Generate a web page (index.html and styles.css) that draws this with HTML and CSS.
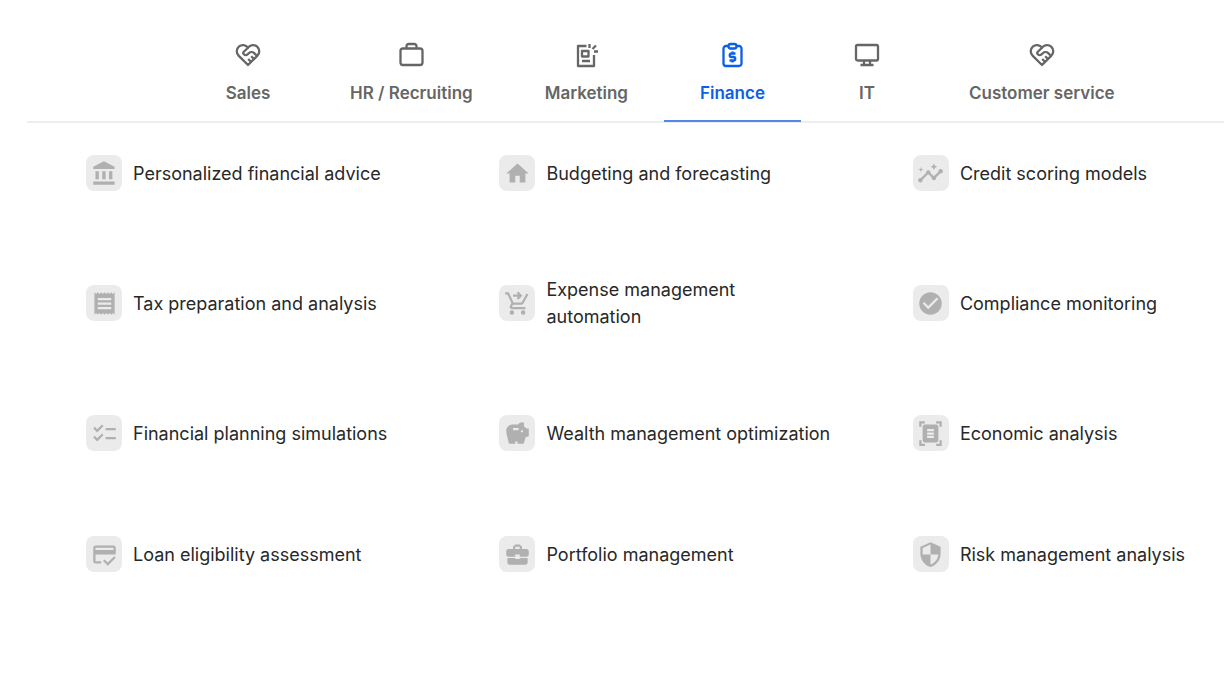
FILE: index.html
```html
<!DOCTYPE html>
<html lang="en">
<head>
    <meta charset="UTF-8">
    <meta name="viewport" content="width=device-width, initial-scale=1.0">
    <title>Use cases - Finance</title>
    <link rel="stylesheet" href="styles.css">
</head>
<body>

    <nav class="tabs">
        <button type="button" class="tab">
            <svg class="tab-icon" viewBox="0 0 28 28"><path d="M23.2 14.9 14 24l-9.2-9.1A6.2 6.2 0 1 1 14 6.7a6.2 6.2 0 1 1 9.2 8.2"/><path d="M14 6.7 9.8 10.8a1.7 1.7 0 0 0 0 2.4c1.2 1.2 2.9 1 4 0l1-1a3.9 3.9 0 0 1 5.4 0l2.9 2.8M17.2 15.2l2.9 2.9M14.2 18l3 3"/></svg>
            <span>Sales</span>
        </button>
        <button type="button" class="tab">
            <svg class="tab-icon" viewBox="0 0 28 28"><rect x="3.5" y="7.5" width="22" height="16.5" rx="2.5"/><path d="M9.500 7.500V5.200A2.200 2.200 0 0 1 11.700 3h5.600A2.200 2.200 0 0 1 19.500 5.200v2.300"/></svg>
            <span>HR / Recruiting</span>
        </button>
        <button type="button" class="tab">
            <svg class="tab-icon" viewBox="0 0 28 28"><path d="M14.5 5H6v20h16V14M10 10h6.500v5.500H10zM10 20h8M17.500 3v4M20.500 8l3.500-3.500M22 10.500h4"/></svg>
            <span>Marketing</span>
        </button>
        <button type="button" class="tab active">
            <svg class="tab-icon" viewBox="0 0 28 28"><path d="M10.500 5H8a2.500 2.500 0 0 0-2.500 2.500v15A2.500 2.500 0 0 0 8 25h13a2.500 2.500 0 0 0 2.500-2.500v-15A2.500 2.500 0 0 0 21 5h-2.500"/><rect x="10.500" y="3" width="8" height="4.500" rx="2.200"/><path d="M17.500 12.500h-4a1.700 1.700 0 0 0 0 3.500h2a1.700 1.700 0 0 1 0 3.500h-4M14.500 10.500v2M14.500 19.500v2"/></svg>
            <span>Finance</span>
        </button>
        <button type="button" class="tab">
            <svg class="tab-icon" viewBox="0 0 28 28"><rect x="3" y="4" width="22" height="15.500" rx="1.500"/><path d="M11 19.500V24M17 19.500V24M7.500 24h13"/></svg>
            <span>IT</span>
        </button>
        <button type="button" class="tab">
            <svg class="tab-icon" viewBox="0 0 28 28"><path d="M23.2 14.9 14 24l-9.2-9.1A6.2 6.2 0 1 1 14 6.7a6.2 6.2 0 1 1 9.2 8.2"/><path d="M14 6.7 9.8 10.8a1.7 1.7 0 0 0 0 2.4c1.2 1.2 2.9 1 4 0l1-1a3.9 3.9 0 0 1 5.4 0l2.9 2.8M17.2 15.2l2.9 2.9M14.2 18l3 3"/></svg>
            <span>Customer service</span>
        </button>
    </nav>

    <ul class="use-cases">
        <li class="use-case">
            <span class="icon-box"><svg viewBox="0 0 24 24"><path d="M4 10v7h3v-7H4zm6 0v7h3v-7h-3zM2 22h19v-3H2v3zm14-12v7h3v-7h-3zm-4.500-9L2 6v2h19V6l-9.500-5z"/></svg></span>
            <span class="label">Personalized financial advice</span>
        </li>
        <li class="use-case">
            <span class="icon-box"><svg viewBox="0 0 24 24"><path d="M10 20v-6h4v6h5v-8h3L12 3 2 12h3v8z"/></svg></span>
            <span class="label">Budgeting and forecasting</span>
        </li>
        <li class="use-case">
            <span class="icon-box"><svg viewBox="0 0 24 24"><path d="M21 8c-1.450 0-2.260 1.440-1.930 2.510l-3.550 3.560c-.3-.09-.74-.09-1.040 0l-2.550-2.550C12.270 10.450 11.460 9 10 9c-1.450 0-2.270 1.440-1.930 2.520l-4.560 4.550C2.440 15.740 1 16.550 1 18c0 1.100.9 2 2 2 1.450 0 2.260-1.440 1.930-2.510l4.550-4.560c.3.09.74.09 1.040 0l2.550 2.550C12.730 16.550 13.540 18 15 18c1.450 0 2.270-1.440 1.930-2.520l3.560-3.550C21.560 12.260 23 11.450 23 10c0-1.100-.9-2-2-2zM15 9l.94-2.070L18 6l-2.060-.93L15 3l-.92 2.070L12 6l2.080.93zM3.500 11 4 9l2-.5L4 8l-.5-2L3 8l-2 .5L3 9z"/></svg></span>
            <span class="label">Credit scoring models</span>
        </li>

        <li class="use-case">
            <span class="icon-box"><svg viewBox="0 0 24 24"><path d="M18 17H6v-2h12v2zm0-4H6v-2h12v2zm0-4H6V7h12v2zM3 22l1.500-1.500L6 22l1.500-1.500L9 22l1.500-1.500L12 22l1.500-1.500L15 22l1.500-1.500L18 22l1.500-1.500L21 22V2l-1.500 1.500L18 2l-1.500 1.500L15 2l-1.500 1.500L12 2l-1.500 1.500L9 2 7.500 3.500 6 2 4.500 3.500 3 2v20z"/></svg></span>
            <span class="label">Tax preparation and analysis</span>
        </li>
        <li class="use-case">
            <span class="icon-box"><svg viewBox="0 0 24 24"><path d="M7 18a2 2 0 1 0 0 4 2 2 0 0 0 0-4zm10 0a2 2 0 1 0 0 4 2 2 0 0 0 0-4zm-1.450-5c.75 0 1.410-.41 1.750-1.030L21.700 4 19.960 3l-4.400 8H8.530L4.270 2H1v2h2l3.600 7.590-1.350 2.440C4.520 15.370 5.480 17 7 17h12v-2H7l1.100-2h7.450zM11.300 2.700 12.600 4H8v2h4.600l-1.300 1.300 1.400 1.400L16.400 5l-3.700-3.700-1.400 1.400z"/></svg></span>
            <span class="label">Expense management automation</span>
        </li>
        <li class="use-case">
            <span class="icon-box"><svg viewBox="0 0 24 24"><path d="M12 2C6.480 2 2 6.480 2 12s4.480 10 10 10 10-4.480 10-10S17.520 2 12 2zm-2 15-5-5 1.410-1.410L10 14.170l7.590-7.590L19 8l-9 9z"/></svg></span>
            <span class="label">Compliance monitoring</span>
        </li>

        <li class="use-case">
            <span class="icon-box"><svg viewBox="0 0 24 24"><path d="M22 7h-9v2h9V7zm0 8h-9v2h9v-2zM5.540 11 2 7.460l1.410-1.410 2.120 2.120 4.240-4.240 1.410 1.410L5.540 11zm0 8L2 15.460l1.410-1.410 2.120 2.120 4.240-4.240 1.410 1.410L5.540 19z"/></svg></span>
            <span class="label">Financial planning simulations</span>
        </li>
        <li class="use-case">
            <span class="icon-box"><svg viewBox="0 0 24 24"><path d="m19.830 7.500-2.270-2.270c.07-.42.18-.81.32-1.150.08-.18.12-.37.12-.58 0-.83-.67-1.500-1.500-1.500-1.640 0-3.090.79-4 2h-5C4.460 4 2 6.460 2 9.500S4.500 21 4.500 21H10v-2h2v2h5.500l1.680-5.590 2.820-.94V7.500h-2.170zM13 9H8V7h5v2zm3 2c-.55 0-1-.45-1-1s.45-1 1-1 1 .45 1 1-.45 1-1 1z"/></svg></span>
            <span class="label">Wealth management optimization</span>
        </li>
        <li class="use-case">
            <span class="icon-box"><svg viewBox="0 0 24 24"><path d="M7 3H4v3H2V1h5v2zm15 3V1h-5v2h3v3h2zM7 21H4v-3H2v5h5v-2zm13-3v3h-3v2h5v-5h-2zm-1 0c0 1.100-.9 2-2 2H7c-1.100 0-2-.9-2-2V6c0-1.100.9-2 2-2h10c1.100 0 2 .9 2 2v12zM15 8H9v2h6V8zm0 3H9v2h6v-2zm0 3H9v2h6v-2z"/></svg></span>
            <span class="label">Economic analysis</span>
        </li>

        <li class="use-case">
            <span class="icon-box"><svg viewBox="0 0 24 24"><path d="M20 4H4c-1.110 0-1.990.89-1.990 2L2 18c0 1.110.89 2 2 2h5v-2H4v-6h18V6c0-1.110-.89-2-2-2zm0 4H4V6h16v2zm-5.070 11.170-2.830-2.830-1.410 1.410L14.930 22 22 14.930l-1.410-1.410-5.660 5.650z"/></svg></span>
            <span class="label">Loan eligibility assessment</span>
        </li>
        <li class="use-case">
            <span class="icon-box"><svg viewBox="0 0 24 24"><path d="M10 16v-1H3v4c0 1.110.89 2 2 2h14c1.110 0 2-.89 2-2v-4h-7v1h-4zm10-9h-4V5l-2-2h-4L8 5v2H4c-1.100 0-2 .9-2 2v3c0 1.110.89 2 2 2h6v-2h4v2h6c1.100 0 2-.9 2-2V9c0-1.100-.9-2-2-2zm-6 0h-4V5h4v2z"/></svg></span>
            <span class="label">Portfolio management</span>
        </li>
        <li class="use-case">
            <span class="icon-box"><svg viewBox="0 0 24 24"><path d="M12 1 3 5v6c0 5.550 3.840 10.740 9 12 5.160-1.260 9-6.450 9-12V5l-9-4zm0 11h7c-.53 4.120-3.280 7.790-7 8.940V12H5V6.300l7-3.110V12z"/></svg></span>
            <span class="label">Risk management analysis</span>
        </li>
    </ul>

</body>
</html>
```
FILE: styles.css
```css
* {
    margin: 0;
    padding: 0;
    box-sizing: border-box;
    font-family: Inter, Arial, sans-serif;
}

body {
    background-color: #fff;
    color: #282828;
    padding-left: 27px;
}

/* Tabs */
.tabs {
    display: flex;
    padding: 28px 0 0 155px;
    border-bottom: 2px solid #eeeeee;
}

.tab {
    display: flex;
    flex-direction: column;
    align-items: center;
    gap: 11px;
    min-width: 132px;
    padding: 13px 36px 14px;
    border: none;
    border-bottom: 2px solid transparent;
    margin-bottom: -1px;
    background: none;
    color: #666;
    font-size: 17px;
    font-weight: 600;
    line-height: 26px;
    white-space: nowrap;
    cursor: pointer;
}

.tab.active {
    color: #0b5fea;
    border-bottom-color: #4f8ae8;
}

.tab-icon {
    width: 28px;
    height: 28px;
    fill: none;
    stroke: currentColor;
    stroke-width: 2.3;
    stroke-linejoin: round;
}

/* Use case list */
.use-cases {
    display: grid;
    grid-template-columns: 4fr 4fr 3fr;
    row-gap: 85px;
    padding: 32px 1px 32px 59px;
    list-style: none;
}

.use-case {
    display: flex;
    align-items: center;
    gap: 11px;
}

.icon-box {
    display: flex;
    align-items: center;
    justify-content: center;
    flex-shrink: 0;
    width: 36px;
    height: 36px;
    border-radius: 8px;
    background-color: #ebebeb;
}

.icon-box svg {
    width: 27px;
    height: 27px;
    fill: #b0b0b0;
}

.label {
    max-width: 288px;
    font-size: 18px;
    line-height: 27px;
}
```
